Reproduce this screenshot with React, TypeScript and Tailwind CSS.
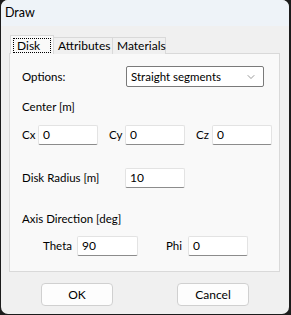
import { ChevronDown } from 'lucide-react';

const FONT = { fontFamily: 'Lato, "Liberation Sans", sans-serif' };

function Field({ value, width }: { value: string; width: string }) {
  return (
    <div
      className={`${width} h-[20px] bg-white border border-[#e3e3e3] border-b-[#8c8c8c] rounded-[2px] pl-[4px] text-[12px] leading-[18px] text-black`}
    >
      {value}
    </div>
  );
}

export default function App() {
  return (
    <div className="w-[291px] h-[315px] bg-[#1c1c1c] pr-[2px] pb-[1px] pl-[1px]" style={FONT}>
      <div className="w-full h-full rounded-[7px] overflow-hidden bg-[#f0f0f0] flex flex-col text-black">
        {/* Title bar */}
        <div className="h-[26px] bg-[#eef3f8] pl-[4px] text-[12.5px] leading-[26px]">Draw</div>

        {/* Tabs */}
        <div className="pl-[8px] pr-[9px] pt-[9px]">
          <div className="flex items-end h-[19px] pl-[1px] text-[12px]">
            <div className="relative z-10 h-[19px] w-[44px] bg-[#f9f9f9] border border-[#d9d9d9] border-b-0 px-[2px] pt-[2px]">
              <div className="h-[15px] border border-dotted border-black leading-[13px] pl-[3px]">Disk</div>
            </div>
            <div className="h-[17px] w-[59px] shrink-0 whitespace-nowrap bg-[#f0f0f0] border border-[#d9d9d9] border-l-0 border-b-0 pl-[4px] leading-[16px]">
              Attributes
            </div>
            <div className="h-[17px] w-[53px] shrink-0 whitespace-nowrap bg-[#f0f0f0] border border-[#d9d9d9] border-l-0 border-b-0 pl-[4px] leading-[16px]">
              Materials
            </div>
          </div>

          {/* Panel */}
          <div className="-mt-px h-[219px] bg-[#f9f9f9] border border-[#d9d9d9] pl-[12px] text-[11.5px]">
            <div className="flex items-center mt-[12px] h-[21px]">
              <span className="w-[104px]">Options:</span>
              <div className="w-[138px] h-[21px] bg-white border border-[#7a7a7a] rounded-[2px] flex items-center justify-between pl-[4px] pr-[6px]">
                <span>Straight segments</span>
                <ChevronDown className="w-[12px] h-[12px] text-[#555]" strokeWidth={1.2} />
              </div>
            </div>

            <div className="mt-[12px] h-[16px] leading-[16px]">Center [m]</div>

            <div className="flex items-center mt-[10px]">
              <span className="w-[16px]">Cx</span>
              <Field value="0" width="w-[60px]" />
              <span className="ml-[11px] w-[16px]">Cy</span>
              <Field value="0" width="w-[60px]" />
              <span className="ml-[11px] w-[16px]">Cz</span>
              <Field value="0" width="w-[60px]" />
            </div>

            <div className="flex items-center mt-[23px]">
              <span className="w-[103px]">Disk Radius [m]</span>
              <Field value="10" width="w-[60px]" />
            </div>

            <div className="mt-[23px] h-[16px] leading-[16px]">Axis Direction [deg]</div>

            <div className="flex items-center mt-[9px] pl-[21px]">
              <span className="w-[34px]">Theta</span>
              <Field value="90" width="w-[61px]" />
              <span className="ml-[28px] w-[22px]">Phi</span>
              <Field value="0" width="w-[60px]" />
            </div>
          </div>
        </div>

        {/* Buttons */}
        <div className="flex pl-[40px] mt-[11px] gap-[64px] text-[12px]">
          <button className="w-[72px] h-[23px] bg-[#fdfdfd] border border-[#d0d0d0] rounded-[4px]">OK</button>
          <button className="w-[72px] h-[23px] bg-[#fdfdfd] border border-[#d0d0d0] rounded-[4px]">Cancel</button>
        </div>
      </div>
    </div>
  );
}
